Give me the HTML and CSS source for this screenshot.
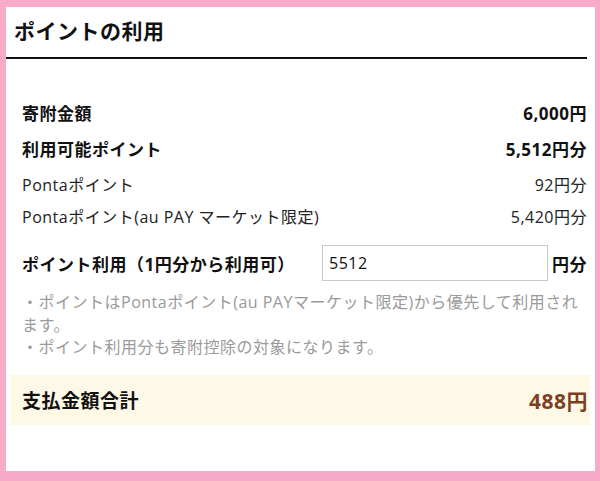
FILE: index.html
```html
<!DOCTYPE html>
<html lang="ja">
<head>
<meta charset="utf-8">
<link rel="stylesheet" href="styles.css">
</head>
<body>
<div class="frame">
  <div class="card">
    <div class="header"><h1 class="title">ポイントの利用</h1></div>
    <div class="content">
      <div class="row strong r1"><span>寄附金額</span><span>6,000円</span></div>
      <div class="row strong r2"><span>利用可能ポイント</span><span>5,512円分</span></div>
      <div class="row r3"><span>Pontaポイント</span><span>92円分</span></div>
      <div class="row r4"><span>Pontaポイント(au PAY マーケット限定)</span><span>5,420円分</span></div>
      <div class="use-row">
        <span class="use-label">ポイント利用（1円分から利用可）</span>
        <input class="use-input" type="text" value="5512">
        <span class="use-unit">円分</span>
      </div>
      <div class="notes">
        <p>・ポイントはPontaポイント(au PAYマーケット限定)から優先して利用されます。</p>
        <p>・ポイント利用分も寄附控除の対象になります。</p>
      </div>
    </div>
    <div class="total">
      <span class="total-label">支払金額合計</span>
      <span class="total-value">488円</span>
    </div>
  </div>
</div>
</body>
</html>
```

FILE: styles.css
```css
html, body {
  margin: 0;
  padding: 0;
  background: #f7abc9;
}
body {
  font-family: "Open Sans", "Noto Sans CJK JP", sans-serif;
  color: #111;
  letter-spacing: 0.5px;
}
.frame {
  width: 600px;
  height: 481px;
  box-sizing: border-box;
  padding: 7px 5px 10px 6px;
}
.card {
  background: #fff;
  height: 464px;
  display: flex;
  flex-direction: column;
}
.header {
  margin-right: 8px;
  border-bottom: 2px solid #111;
  height: 50px;
}
.title {
  margin: 0;
  padding: 10px 0 0 8px;
  font-size: 21px;
  font-weight: 700;
  line-height: 28px;
}
.content {
  padding: 45px 8px 0 16px;
}
.row {
  display: flex;
  justify-content: space-between;
  font-size: 16px;
  line-height: 20px;
  color: #222;
}
.row.strong {
  font-weight: 700;
  font-size: 17px;
  color: #111;
}
.r2 { margin-top: 16px; }
.r3 { margin-top: 15px; }
.r4 { margin-top: 12px; }
.use-row {
  display: flex;
  align-items: center;
  margin-top: 18px;
  height: 36px;
}
.use-label {
  font-weight: 700;
  font-size: 17px;
  width: 300px;
}
.use-input {
  width: 226px;
  height: 36px;
  box-sizing: border-box;
  border: 1px solid #c8c8c8;
  padding: 0 6px;
  font-family: "Open Sans", "Noto Sans CJK JP", sans-serif;
  font-size: 16px;
  letter-spacing: 0.5px;
  color: #111;
  margin: 0;
}
.use-unit {
  margin-left: auto;
  font-weight: 700;
  font-size: 17px;
}
.notes {
  margin-top: 10px;
  color: #9a9a9a;
  font-size: 16px;
  line-height: 22.5px;
}
.notes p {
  margin: 0;
}
.total {
  margin: 16px 5px 0 4px;
  height: 50px;
  background: #fef9e6;
  display: flex;
  align-items: center;
  justify-content: space-between;
  padding: 0 2px 0 12px;
}
.total-label {
  font-weight: 700;
  font-size: 19px;
}
.total-value {
  font-weight: 700;
  font-size: 21px;
  color: #7b3f24;
}
```
